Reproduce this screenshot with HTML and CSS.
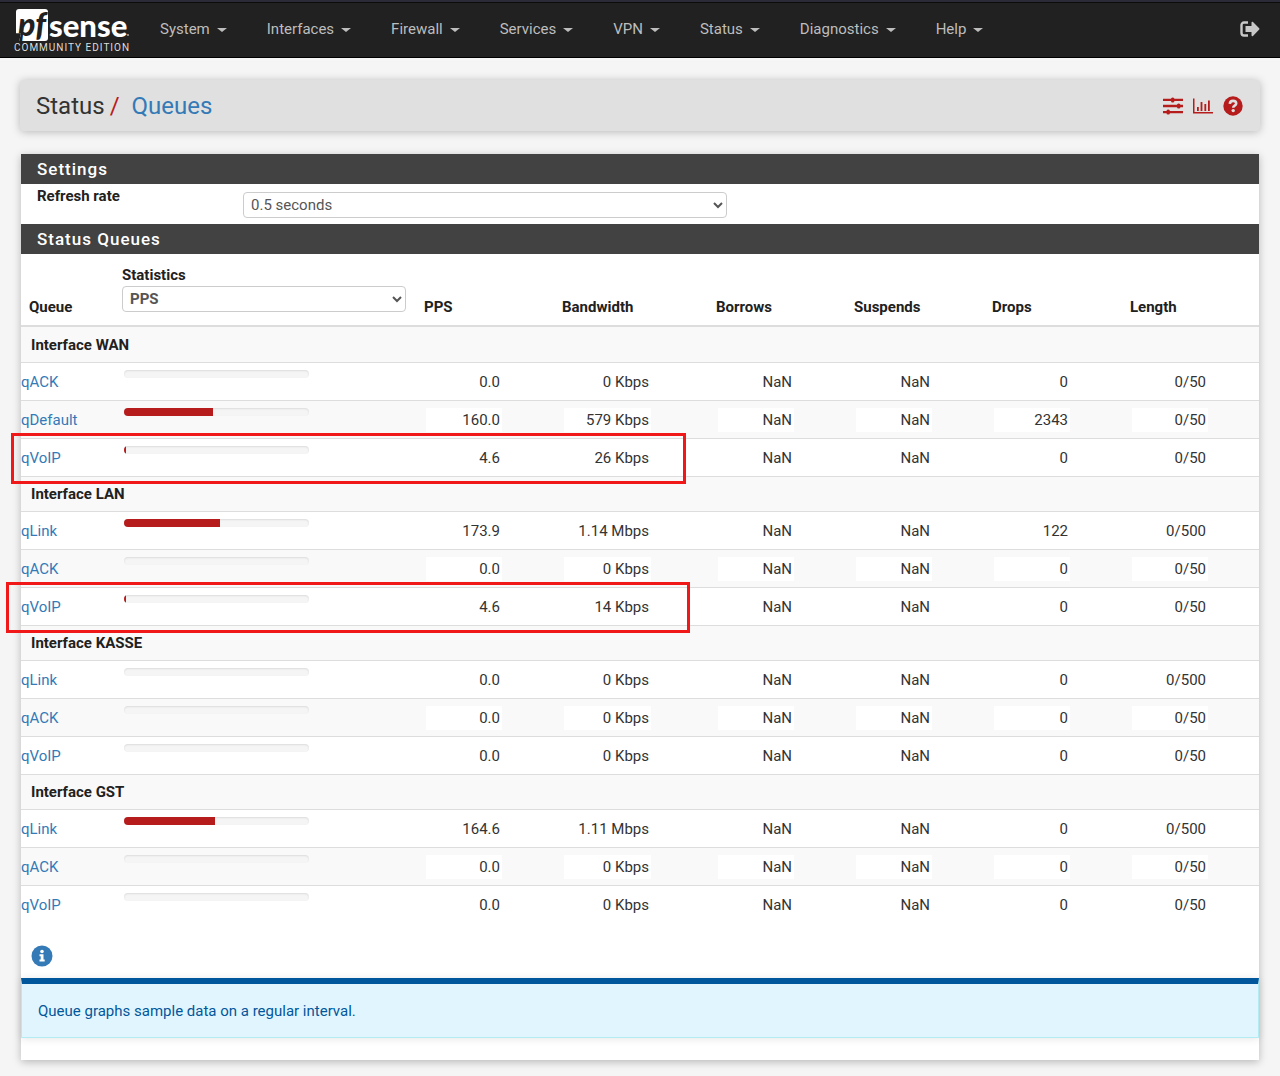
FILE: index.html
```html
<!DOCTYPE html>
<html lang="en">
<head>
    <meta charset="UTF-8">
    <meta name="viewport" content="width=device-width, initial-scale=1.0">
    <title>Status: Queues</title>
    <link rel="stylesheet" href="styles.css">
</head>
<body>

    <nav class="navbar">
        <a class="brand" href="#">
            <span class="brand-logo">
                <span class="brand-pf">pf</span>
                <span class="brand-sense">sense</span>
                <span class="brand-dot"></span>
            </span>
            <span class="brand-edition">COMMUNITY EDITION</span>
        </a>
        <div class="nav-links">
            <a href="#">System <span class="caret"></span></a>
            <a href="#">Interfaces <span class="caret"></span></a>
            <a href="#">Firewall <span class="caret"></span></a>
            <a href="#">Services <span class="caret"></span></a>
            <a href="#">VPN <span class="caret"></span></a>
            <a href="#">Status <span class="caret"></span></a>
            <a href="#">Diagnostics <span class="caret"></span></a>
            <a href="#">Help <span class="caret"></span></a>
        </div>
        <a class="logout" href="#" aria-label="Logout">
            <svg width="20" height="16" viewBox="0 0 20 16">
                <path d="M8 1.5H4A2.5 2.5 0 0 0 1.5 4v8A2.5 2.5 0 0 0 4 14.5h4" fill="none" stroke="currentColor" stroke-width="2.4"/>
                <path d="M5.5 5h6V1.6c0-.9.9-1.2 1.5-.6l6.2 6.2c.4.4.4 1 0 1.4L13 14.9c-.6.6-1.5.3-1.5-.6V11h-6z" fill="currentColor"/>
            </svg>
        </a>
    </nav>

    <div class="container">
        <header class="page-header">
            <h1>Status<span class="slash">/</span><a href="#">Queues</a></h1>
            <div class="shortcuts">
                <a href="#" aria-label="Related settings">
                    <svg width="20" height="18" viewBox="0 0 20 18" fill="currentColor">
                        <path d="M0 1.700h20v2.400H0zM0 7.800h20v2.400H0zM0 13.900h20v2.400H0z"/>
                        <rect x="8" y="0.5" width="3.400" height="5" rx="1.500"/>
                        <rect x="14" y="6.500" width="3.400" height="5" rx="1.500"/>
                        <rect x="3.500" y="12.500" width="3.400" height="5" rx="1.500"/>
                    </svg>
                </a>
                <a href="#" aria-label="Related status">
                    <svg width="20" height="16" viewBox="0 0 20 16" fill="currentColor">
                        <path d="M0 .5h1.500v13.500H20v1.500H0zM4 9h1.800v4H4zM7.600 4h1.800v9H7.600zM11.400 6h1.800v7h-1.800zM15 2.500h1.800V13H15z"/>
                    </svg>
                </a>
                <a href="#" aria-label="Help">
                    <svg width="20" height="20" viewBox="0 0 20 20">
                        <circle cx="10" cy="10" r="9.7" fill="currentColor"/>
                        <path d="M6.800 7.800C7 5.900 8.200 4.900 10 4.900c1.900 0 3.200 1 3.200 2.600 0 2.300-3 2-3 4.200" fill="none" stroke="#e0e0e0" stroke-width="2.600"/>
                        <circle cx="10.200" cy="14.600" r="1.700" fill="#e0e0e0"/>
                    </svg>
                </a>
            </div>
        </header>

        <form class="panel">
            <h2 class="panel-heading">Settings</h2>
            <div class="form-row">
                <label for="refresh">Refresh rate</label>
                <select id="refresh" class="form-control">
                    <option>0.5 seconds</option>
                    <option>1 second</option>
                    <option>5 seconds</option>
                </select>
            </div>

            <h2 class="panel-heading">Status Queues</h2>
            <table class="queues">
                <colgroup>
                    <col class="col-queue">
                    <col>
                    <col class="col-value">
                    <col class="col-bandwidth">
                    <col class="col-value">
                    <col class="col-value">
                    <col class="col-value">
                    <col class="col-length">
                </colgroup>
                <thead>
                    <tr>
                        <th>Queue</th>
                        <th>
                            <label for="statistics">Statistics</label>
                            <select id="statistics" class="form-control">
                                <option>PPS</option>
                                <option>Bandwidth</option>
                            </select>
                        </th>
                        <th>PPS</th>
                        <th>Bandwidth</th>
                        <th>Borrows</th>
                        <th>Suspends</th>
                        <th>Drops</th>
                        <th>Length</th>
                    </tr>
                </thead>
                <tbody>
                    <tr class="interface"><td colspan="8">Interface WAN</td></tr>
                    <tr>
                        <td><a href="#">qACK</a></td>
                        <td><div class="progress"><div class="bar" style="width: 0%"></div></div></td>
                        <td><input value="0.0" aria-label="PPS" readonly></td>
                        <td><input value="0 Kbps" aria-label="Bandwidth" class="wide" readonly></td>
                        <td><input value="NaN" aria-label="Borrows" readonly></td>
                        <td><input value="NaN" aria-label="Suspends" readonly></td>
                        <td><input value="0" aria-label="Drops" readonly></td>
                        <td><input value="0/50" aria-label="Length" readonly></td>
                    </tr>
                    <tr class="odd">
                        <td><a href="#">qDefault</a></td>
                        <td><div class="progress"><div class="bar" style="width: 48%"></div></div></td>
                        <td><input value="160.0" aria-label="PPS" readonly></td>
                        <td><input value="579 Kbps" aria-label="Bandwidth" class="wide" readonly></td>
                        <td><input value="NaN" aria-label="Borrows" readonly></td>
                        <td><input value="NaN" aria-label="Suspends" readonly></td>
                        <td><input value="2343" aria-label="Drops" readonly></td>
                        <td><input value="0/50" aria-label="Length" readonly></td>
                    </tr>
                    <tr>
                        <td><a href="#">qVoIP</a><span class="marker marker-wan"></span></td>
                        <td><div class="progress"><div class="bar" style="width: 1%"></div></div></td>
                        <td><input value="4.6" aria-label="PPS" readonly></td>
                        <td><input value="26 Kbps" aria-label="Bandwidth" class="wide" readonly></td>
                        <td><input value="NaN" aria-label="Borrows" readonly></td>
                        <td><input value="NaN" aria-label="Suspends" readonly></td>
                        <td><input value="0" aria-label="Drops" readonly></td>
                        <td><input value="0/50" aria-label="Length" readonly></td>
                    </tr>

                    <tr class="interface"><td colspan="8">Interface LAN</td></tr>
                    <tr>
                        <td><a href="#">qLink</a></td>
                        <td><div class="progress"><div class="bar" style="width: 52%"></div></div></td>
                        <td><input value="173.9" aria-label="PPS" readonly></td>
                        <td><input value="1.14 Mbps" aria-label="Bandwidth" class="wide" readonly></td>
                        <td><input value="NaN" aria-label="Borrows" readonly></td>
                        <td><input value="NaN" aria-label="Suspends" readonly></td>
                        <td><input value="122" aria-label="Drops" readonly></td>
                        <td><input value="0/500" aria-label="Length" readonly></td>
                    </tr>
                    <tr class="odd">
                        <td><a href="#">qACK</a></td>
                        <td><div class="progress"><div class="bar" style="width: 0%"></div></div></td>
                        <td><input value="0.0" aria-label="PPS" readonly></td>
                        <td><input value="0 Kbps" aria-label="Bandwidth" class="wide" readonly></td>
                        <td><input value="NaN" aria-label="Borrows" readonly></td>
                        <td><input value="NaN" aria-label="Suspends" readonly></td>
                        <td><input value="0" aria-label="Drops" readonly></td>
                        <td><input value="0/50" aria-label="Length" readonly></td>
                    </tr>
                    <tr>
                        <td><a href="#">qVoIP</a><span class="marker marker-lan"></span></td>
                        <td><div class="progress"><div class="bar" style="width: 1%"></div></div></td>
                        <td><input value="4.6" aria-label="PPS" readonly></td>
                        <td><input value="14 Kbps" aria-label="Bandwidth" class="wide" readonly></td>
                        <td><input value="NaN" aria-label="Borrows" readonly></td>
                        <td><input value="NaN" aria-label="Suspends" readonly></td>
                        <td><input value="0" aria-label="Drops" readonly></td>
                        <td><input value="0/50" aria-label="Length" readonly></td>
                    </tr>

                    <tr class="interface"><td colspan="8">Interface KASSE</td></tr>
                    <tr>
                        <td><a href="#">qLink</a></td>
                        <td><div class="progress"><div class="bar" style="width: 0%"></div></div></td>
                        <td><input value="0.0" aria-label="PPS" readonly></td>
                        <td><input value="0 Kbps" aria-label="Bandwidth" class="wide" readonly></td>
                        <td><input value="NaN" aria-label="Borrows" readonly></td>
                        <td><input value="NaN" aria-label="Suspends" readonly></td>
                        <td><input value="0" aria-label="Drops" readonly></td>
                        <td><input value="0/500" aria-label="Length" readonly></td>
                    </tr>
                    <tr class="odd">
                        <td><a href="#">qACK</a></td>
                        <td><div class="progress"><div class="bar" style="width: 0%"></div></div></td>
                        <td><input value="0.0" aria-label="PPS" readonly></td>
                        <td><input value="0 Kbps" aria-label="Bandwidth" class="wide" readonly></td>
                        <td><input value="NaN" aria-label="Borrows" readonly></td>
                        <td><input value="NaN" aria-label="Suspends" readonly></td>
                        <td><input value="0" aria-label="Drops" readonly></td>
                        <td><input value="0/50" aria-label="Length" readonly></td>
                    </tr>
                    <tr>
                        <td><a href="#">qVoIP</a></td>
                        <td><div class="progress"><div class="bar" style="width: 0%"></div></div></td>
                        <td><input value="0.0" aria-label="PPS" readonly></td>
                        <td><input value="0 Kbps" aria-label="Bandwidth" class="wide" readonly></td>
                        <td><input value="NaN" aria-label="Borrows" readonly></td>
                        <td><input value="NaN" aria-label="Suspends" readonly></td>
                        <td><input value="0" aria-label="Drops" readonly></td>
                        <td><input value="0/50" aria-label="Length" readonly></td>
                    </tr>

                    <tr class="interface"><td colspan="8">Interface GST</td></tr>
                    <tr>
                        <td><a href="#">qLink</a></td>
                        <td><div class="progress"><div class="bar" style="width: 49%"></div></div></td>
                        <td><input value="164.6" aria-label="PPS" readonly></td>
                        <td><input value="1.11 Mbps" aria-label="Bandwidth" class="wide" readonly></td>
                        <td><input value="NaN" aria-label="Borrows" readonly></td>
                        <td><input value="NaN" aria-label="Suspends" readonly></td>
                        <td><input value="0" aria-label="Drops" readonly></td>
                        <td><input value="0/500" aria-label="Length" readonly></td>
                    </tr>
                    <tr class="odd">
                        <td><a href="#">qACK</a></td>
                        <td><div class="progress"><div class="bar" style="width: 0%"></div></div></td>
                        <td><input value="0.0" aria-label="PPS" readonly></td>
                        <td><input value="0 Kbps" aria-label="Bandwidth" class="wide" readonly></td>
                        <td><input value="NaN" aria-label="Borrows" readonly></td>
                        <td><input value="NaN" aria-label="Suspends" readonly></td>
                        <td><input value="0" aria-label="Drops" readonly></td>
                        <td><input value="0/50" aria-label="Length" readonly></td>
                    </tr>
                    <tr>
                        <td><a href="#">qVoIP</a></td>
                        <td><div class="progress"><div class="bar" style="width: 0%"></div></div></td>
                        <td><input value="0.0" aria-label="PPS" readonly></td>
                        <td><input value="0 Kbps" aria-label="Bandwidth" class="wide" readonly></td>
                        <td><input value="NaN" aria-label="Borrows" readonly></td>
                        <td><input value="NaN" aria-label="Suspends" readonly></td>
                        <td><input value="0" aria-label="Drops" readonly></td>
                        <td><input value="0/50" aria-label="Length" readonly></td>
                    </tr>
                </tbody>
            </table>

            <button type="button" class="info-toggle" aria-label="Show info">
                <svg width="22" height="22" viewBox="0 0 22 22">
                    <circle cx="11" cy="11" r="10.500" fill="#337ab7"/>
                    <circle cx="11" cy="6.500" r="1.800" fill="#fff"/>
                    <path d="M8.500 9.300h4v5.200h1.200v2H8.500v-2h1.200v-3.200H8.500z" fill="#fff"/>
                </svg>
            </button>
            <div class="alert">Queue graphs sample data on a regular interval.</div>
        </form>
    </div>

</body>
</html>
```
FILE: styles.css
```css
* {
    box-sizing: border-box;
}

body {
    margin: 0;
    background: #f5f5f5;
    color: #333;
    font-family: Roboto, "Liberation Sans", sans-serif;
    font-size: 15px;
    line-height: 22px;
}

a {
    color: #337ab7;
    text-decoration: none;
}

/* top menu */
.navbar {
    display: flex;
    align-items: center;
    height: 58px;
    padding: 0 20px 2px 14px;
    background: #212121;
    border-top: 2px solid #2b2b38;
    border-bottom: 1px solid #000;
    box-shadow: inset 0 1px 0 #0c0c0c;
}

.brand {
    display: flex;
    flex-direction: column;
    width: 126px;
    padding-top: 7px;
    color: #fff;
}

.brand-logo {
    display: flex;
    align-items: center;
    height: 32px;
    padding-left: 2px;
}

.brand-pf {
    width: 32px;
    height: 32px;
    border-radius: 3px;
    background: #fff;
    clip-path: polygon(0 0, 100% 0, 100% 100%, 10% 100%, 16% 76%, 0 76%);
    color: #212121;
    font: italic 900 32px/30px Lato, sans-serif;
    text-align: center;
}

.brand-sense {
    margin-left: 1px;
    font: 900 31px/30px Lato, sans-serif;
}

.brand-dot {
    align-self: flex-end;
    width: 2px;
    height: 2px;
    margin-bottom: 5px;
    border-radius: 50%;
    background: #aaa;
}

.brand-edition {
    color: #ddd;
    font-size: 10px;
    line-height: 14px;
    letter-spacing: 1px;
    white-space: nowrap;
}

.nav-links {
    display: flex;
    flex: 1;
}

.nav-links a {
    display: flex;
    align-items: center;
    gap: 7px;
    padding: 0 20px;
    color: #bdbdbd;
}

.caret {
    margin-top: 3px;
    border-top: 4px solid #bdbdbd;
    border-left: 5px solid transparent;
    border-right: 5px solid transparent;
}

.logout {
    display: flex;
    color: #c8c8c8;
}

.container {
    padding: 22px 20px 16px;
}

/* title bar */
.page-header {
    display: flex;
    align-items: center;
    justify-content: space-between;
    height: 51px;
    margin-bottom: 23px;
    padding: 0 17px 0 16px;
    background: #e0e0e0;
    border-radius: 4px;
    box-shadow: 0 1px 8px rgba(0, 0, 0, 0.25);
}

.page-header h1 {
    margin: 0;
    font-size: 24px;
    line-height: 32px;
    font-weight: 400;
}

.slash {
    margin: 0 12px 0 5px;
    color: #b71c1c;
}

.shortcuts {
    display: flex;
    align-items: center;
    gap: 10px;
}

.shortcuts a {
    display: flex;
    color: #b71c1c;
}

/* panel */
.panel {
    margin: 0 1px;
    padding-bottom: 22px;
    background: #fff;
    box-shadow: 0 2px 8px rgba(0, 0, 0, 0.25);
}

.panel-heading {
    margin: 0;
    padding: 0 16px;
    background: #424242;
    color: #fff;
    font-size: 17px;
    line-height: 30px;
    font-weight: 500;
    letter-spacing: 1px;
}

.form-row {
    display: grid;
    grid-template-columns: 206px 1fr;
    height: 40px;
    padding-left: 16px;
}

.form-row label {
    padding-top: 1px;
    font-weight: 700;
    color: #212121;
}

.form-row .form-control {
    width: 484px;
    margin-top: 8px;
}

.form-control {
    display: block;
    width: 100%;
    height: 26px;
    padding: 0 3px;
    background: #fff;
    border: 1px solid #ccc;
    border-radius: 4px;
    color: #555;
    font: inherit;
}

.queues {
    width: 100%;
    table-layout: fixed;
    border-collapse: separate;
    border-spacing: 0;
}

.col-queue {
    width: 93px;
}

.col-value {
    width: 138px;
}

.col-bandwidth {
    width: 154px;
}

.col-length {
    width: 137px;
}

.queues th {
    height: 73px;
    padding: 8px 8px 7px;
    border-bottom: 2px solid #ddd;
    color: #212121;
    text-align: left;
    vertical-align: bottom;
}

.queues th label {
    display: block;
}

.queues th .form-control {
    width: 284px;
    margin-bottom: 6px;
}

.queues td {
    height: 38px;
    padding: 0;
    border-top: 1px solid #ddd;
    position: relative;
}

.queues td input {
    display: block;
    width: 76px;
    height: 24px;
    margin-left: 10px;
    padding: 0 2px;
    background: #fff;
    border: 0;
    color: #333;
    font: inherit;
    text-align: right;
}

.queues td input.wide {
    width: 87px;
}

.queues .odd td {
    background: #f9f9f9;
}

.queues .interface td {
    height: 35px;
    padding-left: 10px;
    background: #f9f9f9;
    color: #212121;
    font-weight: 700;
}

.queues .interface:first-child td {
    border-top: 0;
}

.progress {
    width: 185px;
    height: 8px;
    margin: 0 0 16px 10px;
    overflow: hidden;
    background: #f5f5f5;
    border-radius: 4px;
    box-shadow: inset 0 1px 2px rgba(0, 0, 0, 0.1);
}

.bar {
    height: 100%;
    background: #b71c1c;
}

/* red frames round the VoIP queues */
.marker {
    position: absolute;
    z-index: 1;
    height: 51px;
    border: 3px solid #f01818;
    pointer-events: none;
}

.marker-wan {
    top: -6px;
    left: -10px;
    width: 675px;
}

.marker-lan {
    top: -6px;
    left: -15px;
    width: 684px;
}

.info-toggle {
    display: flex;
    margin: 22px 0 11px 10px;
    padding: 0;
    background: none;
    border: 0;
    cursor: pointer;
}

.alert {
    padding: 16px 16px 15px;
    background: #e1f5fe;
    border: 1px solid #b2ebf2;
    border-top: 6px solid #01579b;
    color: #01579b;
    box-shadow: 0 1px 8px rgba(0, 0, 0, 0.1);
}
```
